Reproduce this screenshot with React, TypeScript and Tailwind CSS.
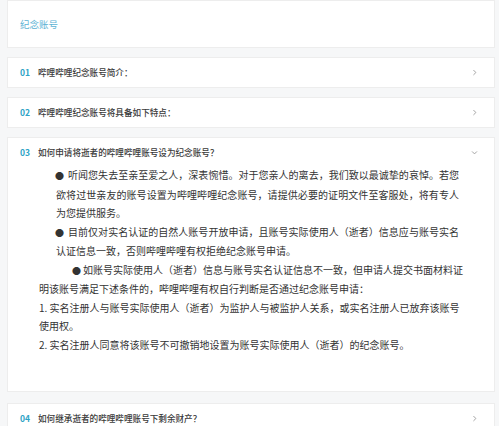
import React from "react";

const font = { fontFamily: '"Noto Sans CJK SC", "Noto Sans", sans-serif' };

function Chevron({ down }: { down?: boolean }) {
  return (
    <svg width="7" height="7" viewBox="0 0 10 10" className="text-[#9a9a9a]">
      {down ? (
        <path d="M1.5 3.5 L5 7 L8.5 3.5" fill="none" stroke="currentColor" strokeWidth="1.3" />
      ) : (
        <path d="M3.5 1.5 L7 5 L3.5 8.5" fill="none" stroke="currentColor" strokeWidth="1.3" />
      )}
    </svg>
  );
}

function Header({ n, title, down }: { n: string; title: string; down?: boolean }) {
  return (
    <div className="flex items-center h-[29px] pl-[12px] pr-[16px]">
      <span className="text-[8.5px] font-bold text-[#2ea3c6] w-[18px]">{n}</span>
      <span className="text-[8.6px] font-medium text-[#3a3a3a] flex-1">{title}</span>
      <Chevron down={down} />
    </div>
  );
}

function J({ children }: { children: React.ReactNode }) {
  return <div className="text-justify [text-align-last:justify]">{children}</div>;
}

function L({ children }: { children: React.ReactNode }) {
  return <div>{children}</div>;
}

export default function App() {
  return (
    <div style={font} className="w-[499px] h-[426px] overflow-hidden bg-[#f6f7f8] pl-[7px] pr-[4px] flex flex-col">
      <div className="bg-white border border-[#ededed] h-[48px] shrink-0 flex items-center pl-[12px]">
        <span className="text-[9.5px] text-[#5db3d4]">纪念账号</span>
      </div>
      <div className="bg-white border border-[#ededed] mt-[9px] shrink-0">
        <Header n="01" title="哔哩哔哩纪念账号简介：" />
      </div>
      <div className="bg-white border border-[#ededed] mt-[9px] shrink-0">
        <Header n="02" title="哔哩哔哩纪念账号将具备如下特点：" />
      </div>
      <div className="bg-white border border-[#ededed] mt-[9px] h-[255px] shrink-0">
        <Header n="03" title="如何申请将逝者的哔哩哔哩账号设为纪念账号？" down />
        <div className="ml-[31px] w-[420px] -mt-[1px] text-[10px] leading-[18.55px] text-[#333] whitespace-nowrap">
          <div className="pl-[17px]">
            <J>
              <span className="-ml-[1px] mr-[4px] text-[9px]">●</span>听闻您失去至亲至爱之人，深表惋惜。对于您亲人的离去，我们致以最诚挚的哀悼。若您
            </J>
            <J>欲将过世亲友的账号设置为哔哩哔哩纪念账号，请提供必要的证明文件至客服处，将有专人</J>
            <L>为您提供服务。</L>
          </div>
          <div className="pl-[17px]">
            <J>
              <span className="-ml-[1px] mr-[4px] text-[9px]">●</span>目前仅对实名认证的自然人账号开放申请，且账号实际使用人（逝者）信息应与账号实名
            </J>
            <L>认证信息一致，否则哔哩哔哩有权拒绝纪念账号申请。</L>
          </div>
          <div>
            <J>
              <span className="ml-[33px] mr-[2px] text-[9px]">●</span>如账号实际使用人（逝者）信息与账号实名认证信息不一致，但申请人提交书面材料证
            </J>
            <L>明该账号满足下述条件的，哔哩哔哩有权自行判断是否通过纪念账号申请：</L>
            <J>1. 实名注册人与账号实际使用人（逝者）为监护人与被监护人关系，或实名注册人已放弃该账号</J>
            <L>使用权。</L>
            <L>2. 实名注册人同意将该账号不可撤销地设置为账号实际使用人（逝者）的纪念账号。</L>
          </div>
        </div>
      </div>
      <div className="bg-white border border-[#ededed] mt-[11px] shrink-0">
        <Header n="04" title="如何继承逝者的哔哩哔哩账号下剩余财产？" />
      </div>
    </div>
  );
}
